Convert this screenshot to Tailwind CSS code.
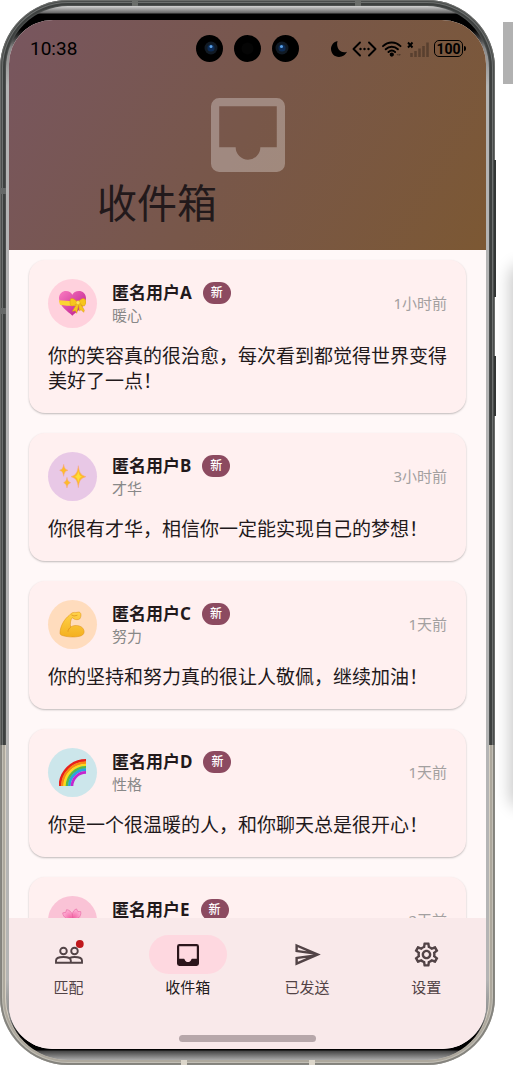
<!DOCTYPE html>
<html lang="zh-CN">
<head>
  <meta charset="UTF-8" />
  <meta name="viewport" content="width=device-width, initial-scale=1.0"/>
  <title>收件箱</title>
  <script src="https://cdn.jsdelivr.net/npm/@tailwindcss/browser@4"></script>
  <style>body { font-family: 'Noto Sans', 'Noto Sans CJK SC', sans-serif; }</style>
</head>
<body class="bg-white text-[#22191b]">
  <div class="relative flex h-screen overflow-hidden">

    <!-- Phone -->
    <div class="relative flex flex-1 rounded-[68px] bg-linear-to-b from-[#4c4f4e] from-70% to-[#d6cfc2] to-70% px-[6px] pt-[6px] pb-[5px] shadow-[inset_0_0_0_1px_#8a8c8880,inset_0_0_0_2px_#00000050,inset_0_0_0_3px_#ffffff40,inset_0_0_0_5px_#00000030]">
      <span class="absolute top-0 left-[132px] h-[6px] w-[6px] bg-[#6b6e6b]"></span>
      <span class="absolute top-0 right-[134px] h-[6px] w-[6px] bg-[#6b6e6b]"></span>
      <span class="absolute top-[308px] left-0 h-[6px] w-[6px] bg-[#666968]"></span>
      <span class="absolute top-[188px] left-0 h-[6px] w-[6px] bg-[#666968]"></span>
      <span class="absolute bottom-0 left-[181px] h-[5px] w-[6px] bg-[#dcd6ca]"></span>
      <span class="absolute right-[180px] bottom-0 h-[5px] w-[6px] bg-[#dcd6ca]"></span>
      <span class="absolute top-[160px] -right-px h-[137px] w-[2px] bg-[#333635]"></span>
      <span class="absolute top-[356px] -right-px h-[60px] w-[2px] bg-[#333635]"></span>

      <div class="flex flex-1 rounded-[62px] bg-[linear-gradient(to_bottom,#d2d2d2_0,#666_7px,#000_8px,#000_24px,#8a8a8a_42px,#b4b4b4_80px,#b4b4b4_calc(100%-80px),#8a8a8a_calc(100%-42px),#000_calc(100%-24px),#000_calc(100%-10px),#444_calc(100%-9px),#aaa_100%)] px-[3px] pt-[14px] pb-[11px]">
        <div class="flex min-w-0 flex-1 flex-col overflow-hidden rounded-[44px] bg-[#fff8f8]">

          <header class="bg-linear-120 from-[#78565f] via-[#785749] to-[#7c5833] pb-[23px]">
            <div class="grid grid-cols-[1fr_auto_1fr] items-center px-5 pt-[15px] text-black">
              <span class="ml-px font-[Roboto] text-[19px] leading-[27px]">10:38</span>
              <div class="flex gap-[11px]">
                <svg class="size-[27px]" viewBox="0 0 27 27"><circle cx="13.5" cy="13.5" r="13.5"/><circle cx="15" cy="13" r="6.5" fill="#111a24"/><circle cx="15" cy="13" r="3.6" fill="#0d2b55"/><circle cx="15" cy="11.5" r="1.5" fill="#5ba2e8"/></svg>
                <svg class="size-[27px]" viewBox="0 0 27 27"><circle cx="13.5" cy="13.5" r="13.5"/><circle cx="13.5" cy="13.5" r="6" fill="#050505"/></svg>
                <svg class="size-[27px]" viewBox="0 0 27 27"><circle cx="13.5" cy="13.5" r="13.5"/><circle cx="10" cy="13" r="6.5" fill="#111a24"/><circle cx="10" cy="13" r="3.6" fill="#0d2b55"/><circle cx="9.5" cy="11.5" r="1.5" fill="#5ba2e8"/></svg>
              </div>
              <div class="flex items-center justify-end gap-[5px]">
                <svg class="size-4" viewBox="0 0 16 16"><path d="M6.5 0C2.8.9 0 4 0 8c0 4.400 3.600 8 8 8 3.600 0 6.700-2.100 8-5.200C10.500 13 4.500 8 6.500 0z"/></svg>
                <svg class="h-4 w-[25px]" viewBox="0 0 25 16" fill="none" stroke="black" stroke-width="1.900" stroke-linecap="round" stroke-linejoin="round"><path d="M8 1.500 1.500 8 8 14.500M17 1.500 23.500 8 17 14.500"/><path d="M8.500 8h.01M12.500 8h.01M16.500 8h.01" stroke-width="2.400"/></svg>
                <svg class="h-4 w-5" viewBox="0 0 20 16" fill="none" stroke="black" stroke-width="1.900" stroke-linecap="round"><path d="M1 5.200c5-5 12.500-5 17.500 0M3.700 8.300c3.500-3.400 8.700-3.400 12.200 0M6.500 11c2-1.800 4.600-1.800 6.600 0"/><circle cx="9.800" cy="13.600" r="1.200" fill="black"/><path d="M14.500 13.800l2-1v2zM19 13.800l-2-1v2z" stroke="none" fill="#00000066"/></svg>
                <svg class="h-4 w-[22px]" viewBox="0 0 22 16"><path d="M1 1.500l4.500 5M5.500 1.500l-4.500 5" stroke="black" stroke-width="1.900"/><path d="M4.500 12v4M8.500 10v6M12.500 7.500v8.500M16.500 5v11M20.500 1.500v14.500" stroke="#00000044" stroke-width="2.600"/></svg>
                <span class="relative mr-[3px] flex h-[17px] w-[29px] items-center justify-center rounded-[5px] border border-black font-[Roboto] text-[14px] leading-none font-bold">100<i class="absolute -right-[4px] h-[5px] w-[2px] rounded-r bg-black"></i></span>
              </div>
            </div>
            <svg class="mx-auto mt-9 size-[74px] text-white/30" viewBox="3 3 18 18" fill="currentColor"><path d="M19 3H5a2 2 0 0 0-2 2v14a2 2 0 0 0 2 2h14a2 2 0 0 0 2-2V5a2 2 0 0 0-2-2zm0 12h-4a3 3 0 0 1-6 0H5V5h14z"/></svg>
            <h1 class="mt-[7px] ml-[88px] text-[40px] leading-[48px]">收件箱</h1>
          </header>

          <main id="message-list" class="flex min-h-0 flex-1 flex-col gap-5 overflow-y-auto px-5 pt-[10px] [scrollbar-width:none]"></main>

          <nav class="bg-[#f9e9ea] pt-[17px] pb-[7px]">
            <div class="grid grid-cols-4 text-[15px] leading-5 text-[#524346]">
              <a href="#match" class="flex flex-col items-center gap-[3px]">
                <span class="flex h-[39px] w-[78px] items-center justify-center">
                  <svg class="size-[30px]" viewBox="0 0 30 30" fill="none" stroke="currentColor" stroke-width="1.900"><circle cx="9.500" cy="11" r="3.300"/><circle cx="20.500" cy="11" r="3.300"/><path d="M2 22.700v-2.200c0-2.300 3.500-3.500 7.400-3.500s7.400 1.200 7.400 3.500v2.200zM16.800 22.700H28v-2.200c0-2.300-3.600-3.500-7.500-3.500-1.800 0-3.500.3-4.900.8"/><circle cx="25.800" cy="4" r="3.900" fill="#c0181c" stroke="none"/></svg>
                </span>
                匹配
              </a>
              <a href="#inbox" class="flex flex-col items-center gap-[3px] text-[#22191b]">
                <span class="flex h-[39px] w-[78px] items-center justify-center rounded-full bg-[#fed8e0]">
                  <svg class="size-[22px] text-[#2b151b]" viewBox="3 3 18 18" fill="currentColor"><path d="M19 3H5a2 2 0 0 0-2 2v14a2 2 0 0 0 2 2h14a2 2 0 0 0 2-2V5a2 2 0 0 0-2-2zm.2 12H15.200c-.6 0-.6 2.700-3.200 2.700S9.400 15 8.800 15H4.800V4.800h14.400z"/></svg>
                </span>
                收件箱
              </a>
              <a href="#sent" class="flex flex-col items-center gap-[3px]">
                <span class="flex h-[39px] w-[78px] items-center justify-center">
                  <svg class="size-[29px]" viewBox="0 0 24 24" fill="currentColor"><path d="M2.010 3 2 10l15 2-15 2 .01 7L23 12 2.010 3zM4 6.030l7.510 3.220-7.510-1V6.030zm7.500 8.720L4 17.970v-2.220l7.510-1z"/></svg>
                </span>
                已发送
              </a>
              <a href="#settings" class="flex flex-col items-center gap-[3px]">
                <span class="flex h-[39px] w-[78px] items-center justify-center">
                  <svg class="size-[29px]" viewBox="0 0 24 24" fill="currentColor"><path d="M19.430 12.980c.04-.32.07-.64.07-.98 0-.34-.03-.66-.07-.98l2.110-1.650c.19-.15.24-.42.12-.64l-2-3.460c-.09-.16-.26-.25-.44-.25-.06 0-.12.01-.17.03l-2.490 1c-.52-.4-1.080-.73-1.690-.98l-.38-2.650C14.460 2.180 14.250 2 14 2h-4c-.25 0-.46.18-.49.42l-.38 2.650c-.61.25-1.170.59-1.690.98l-2.490-1c-.06-.02-.12-.03-.18-.03-.17 0-.34.09-.43.25l-2 3.460c-.13.22-.07.49.12.64l2.110 1.650c-.04.32-.07.65-.07.98 0 .33.03.66.07.98l-2.110 1.650c-.19.15-.24.42-.12.64l2 3.460c.09.16.26.25.44.25.06 0 .12-.01.17-.03l2.490-1c.52.4 1.080.73 1.690.98l.38 2.650c.03.24.24.42.49.42h4c.25 0 .46-.18.49-.42l.38-2.650c.61-.25 1.170-.59 1.690-.98l2.490 1c.06.02.12.03.18.03.17 0 .34-.09.43-.25l2-3.460c.12-.22.07-.49-.12-.64l-2.110-1.650zm-1.980-1.710c.04.31.05.52.05.73 0 .21-.02.43-.05.73l-.14 1.130.89.7 1.080.84-.7 1.210-1.270-.51-1.040-.42-.9.68c-.43.32-.84.56-1.250.73l-1.060.43-.16 1.130-.2 1.350h-1.400l-.19-1.350-.16-1.130-1.060-.43c-.43-.18-.83-.41-1.230-.71l-.91-.7-1.060.43-1.270.51-.7-1.210 1.080-.84.89-.7-.14-1.130c-.03-.31-.05-.54-.05-.74s.02-.43.05-.73l.14-1.130-.89-.7-1.080-.84.7-1.210 1.270.51 1.040.42.9-.68c.43-.32.84-.56 1.250-.73l1.060-.43.16-1.130.2-1.350h1.390l.19 1.350.16 1.130 1.060.43c.43.18.83.41 1.230.71l.91.7 1.060-.43 1.270-.51.7 1.210-1.070.85-.89.7.14 1.130zM12 8c-2.210 0-4 1.790-4 4s1.790 4 4 4 4-1.790 4-4-1.790-4-4-4zm0 6c-1.100 0-2-.9-2-2s.9-2 2-2 2 .9 2 2-.9 2-2 2z"/></svg>
                </span>
                设置
              </a>
            </div>
            <div class="mx-auto mt-[38px] h-[7px] w-[137px] rounded-full bg-[#b7a7aa]"></div>
          </nav>
        </div>
      </div>
    </div>

    <!-- Emulator side bar -->
    <aside class="ml-2 w-[10px]">
      <div class="mt-[22px] h-[62px] bg-[#b1b1b1]"></div>
    </aside>
    <div class="absolute top-[268px] left-full h-[536px] w-20 rounded-lg shadow-[0_0_16px_3px_#00000038]"></div>
  </div>

  <script>
    const icons = {
      heart: `<defs><linearGradient id="heart" x1="0" y1="0" x2="1" y2="1"><stop stop-color="#fb7cc0"/><stop offset="1" stop-color="#b8148c"/></linearGradient></defs>
        <path fill="url(#heart)" d="M40 77C28 66 0 48 0 25 0 11 10 3 21 3c9 0 16 5 19 11C43 8 50 3 60 3c11 0 21 8 21 22 0 23-29 41-41 52z"/>
        <path fill="#fbd532" d="M0 31q40 5 81 0v9q-4 5-6 6-40 4-72-2Q0 38 0 31z"/>
        <path fill="#f7c51d" stroke="#d99a12" stroke-width="1.500" d="M55 36C47 26 37 22 34 28c-2 7-1 17 3 20 7 1 15-5 18-10zM58 36c7-10 17-14 20-8 3 7 2 17-2 20-7 1-14-5-18-10zM53 42 40 64l9-2 4 8 6-24zM59 43l2 20 5-4 8 8 2-6-11-20z"/>
        <circle cx="57" cy="38" r="6" fill="#fde35a" stroke="#d99a12"/>`,
      sparkles: `<g fill="#fdbb2b" stroke="#f6a58c" stroke-width="1.500"><path d="M58 8c3 20 6 27 23 33-17 5-20 12-23 33-3-21-6-28-22-33 16-6 19-13 22-33z"/><path d="M14 4c2 11 4 15 13 18-9 3-11 7-13 18C12 29 10 25 2 22c8-3 10-7 12-18z"/><path d="M24 43c2 10 4 13 11 16-7 3-9 6-11 16-2-10-4-13-10-16 6-3 8-6 10-16z"/></g>
        <path fill="#ffde38" d="M58 24c2 11 4 14 11 17-7 3-9 6-11 17-2-11-4-14-10-17 6-3 8-6 10-17z"/>`,
      muscle: `<defs><linearGradient id="arm" x1="0" y1="0" x2="0" y2="1"><stop stop-color="#ffd34a"/><stop offset="1" stop-color="#f4b01f"/></linearGradient></defs>
        <path fill="url(#arm)" stroke="#dd8f16" stroke-width="1.500" d="M3 66C3 45 18 22 31 13l7-7c6-3 12-1 16-2 7-2 9 0 11 3 2 5 1 12-3 17-5 3-12 2-17 0l-5-4c-6 6-7 19-5 28 8-6 25-7 35 2 9 10 7 22-8 26-17 4-40 2-54-3-4-2-5-4-5-7z"/>
        <path fill="none" stroke="#d98a17" stroke-width="2" stroke-linecap="round" d="M35 48c-5 4-8 9-8 13M38 12l7 3 9-2"/>`,
      rainbow: `<g fill="none" stroke-width="8"><circle cx="81" cy="82" r="78" stroke="#e8201c"/><circle cx="81" cy="82" r="71" stroke="#f98a12"/><circle cx="81" cy="82" r="64" stroke="#fdd81c"/><circle cx="81" cy="82" r="57" stroke="#58b947"/><circle cx="81" cy="82" r="50" stroke="#28a5dc"/><circle cx="81" cy="82" r="42" stroke="#c426d0"/></g>`,
      flower: `<defs><radialGradient id="petal" cx=".5" cy="1" r="1"><stop stop-color="#f04e96"/><stop offset="1" stop-color="#ffb4d8"/></radialGradient><path id="leaf" d="M40 40C30 32 22 16 30 5l8 4 7-5c12 12 5 27-5 36z" fill="url(#petal)" stroke="#e65a9a" stroke-width="1.500"/></defs>
        <use href="#leaf" transform="rotate(36 40 40)"/><use href="#leaf" transform="rotate(108 40 40)"/><use href="#leaf" transform="rotate(180 40 40)"/><use href="#leaf" transform="rotate(252 40 40)"/><use href="#leaf" transform="rotate(324 40 40)"/>
        <circle cx="40" cy="40" r="5" fill="#ffd45c"/>`
    };

    const messages = [
      { name: "匿名用户A", tag: "暖心", time: "1小时前", icon: "heart", color: "bg-[#ffd1dd]", text: "你的笑容真的很治愈，每次看到都觉得世界变得美好了一点！" },
      { name: "匿名用户B", tag: "才华", time: "3小时前", icon: "sparkles", color: "bg-[#e8c8e6]", text: "你很有才华，相信你一定能实现自己的梦想！" },
      { name: "匿名用户C", tag: "努力", time: "1天前", icon: "muscle", color: "bg-[#ffdcbd]", text: "你的坚持和努力真的很让人敬佩，继续加油！" },
      { name: "匿名用户D", tag: "性格", time: "1天前", icon: "rainbow", color: "bg-[#cce6eb]", text: "你是一个很温暖的人，和你聊天总是很开心！" },
      { name: "匿名用户E", tag: "", time: "2天前", icon: "flower", color: "bg-[#fac3d6]", text: "" }
    ];

    document.getElementById("message-list").innerHTML = messages.map(m => `
      <article class="shrink-0 rounded-2xl bg-[#fff0f0] px-[19px] pt-[19px] pb-[19px] shadow-[0_1px_2px_#00000040]">
        <div class="flex items-center">
          <div class="flex size-[49px] shrink-0 items-center justify-center rounded-full ${m.color}">
            <svg class="size-[27px]" viewBox="0 0 81 81">${icons[m.icon]}</svg>
          </div>
          <div class="ml-[15px] flex-1">
            <div class="flex items-center gap-[11px]">
              <h2 class="text-[17px] leading-[22px] font-bold">${m.name}</h2>
              <span class="rounded-full bg-[#8c4a60] px-2 text-[12px] leading-[22px] font-medium text-white">新</span>
            </div>
            <p class="min-h-[22px] text-[15px] leading-[22px] text-[#888]">${m.tag}</p>
          </div>
          <time class="text-[15px] text-[#a3a0a0]">${m.time}</time>
        </div>
        <p class="mt-4 min-h-[25px] text-[19px] leading-[25px]">${m.text}</p>
      </article>
    `).join('');
  </script>
</body>
</html>
